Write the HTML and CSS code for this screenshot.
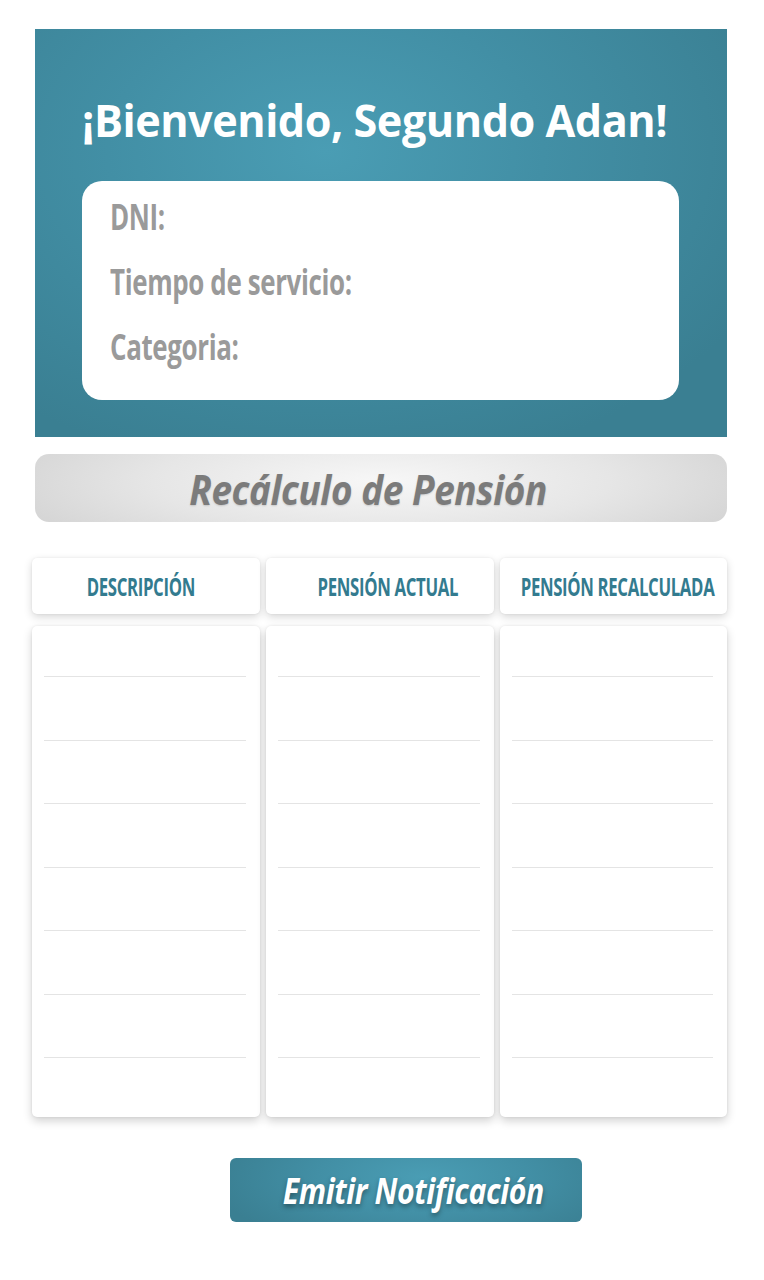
FILE: index.html
```html
<!DOCTYPE html>
<html lang="es">
<head>
<meta charset="utf-8">
<title>Recálculo de Pensión</title>
<link rel="stylesheet" href="styles.css">
</head>
<body>
<main class="page">
  <section class="welcome">
    <h1 class="welcome-title"><span class="cond-title">¡Bienvenido, Segundo Adan!</span></h1>
    <div class="info-card">
      <div class="info-row"><span class="cond-label">DNI:</span></div>
      <div class="info-row"><span class="cond-label">Tiempo de servicio:</span></div>
      <div class="info-row"><span class="cond-label">Categoria:</span></div>
    </div>
  </section>

  <div class="section-bar"><span class="cond-section">Recálculo de Pensión</span></div>

  <section class="table">
    <div class="col">
      <div class="head head-desc"><span class="cond-head">DESCRIPCIÓN</span></div>
      <div class="body">
        <div class="row first"></div><div class="row"></div><div class="row"></div><div class="row"></div><div class="row"></div><div class="row"></div><div class="row"></div><div class="row last"></div>
      </div>
    </div>
    <div class="col">
      <div class="head head-actual"><span class="cond-head">PENSIÓN ACTUAL</span></div>
      <div class="body">
        <div class="row first"></div><div class="row"></div><div class="row"></div><div class="row"></div><div class="row"></div><div class="row"></div><div class="row"></div><div class="row last"></div>
      </div>
    </div>
    <div class="col">
      <div class="head head-recalc"><span class="cond-head">PENSIÓN RECALCULADA</span></div>
      <div class="body">
        <div class="row first"></div><div class="row"></div><div class="row"></div><div class="row"></div><div class="row"></div><div class="row"></div><div class="row"></div><div class="row last"></div>
      </div>
    </div>
  </section>

  <div class="actions">
    <button class="btn" type="button"><span class="cond-btn">Emitir Notificación</span></button>
  </div>
</main>
</body>
</html>
```

FILE: styles.css
```css
* { box-sizing: border-box; }
html, body { margin: 0; padding: 0; background: #ffffff; }
body {
  font-family: "Open Sans", "Noto Sans", "DejaVu Sans", sans-serif;
  width: 764px;
  height: 1280px;
  overflow: hidden;
}
.page {
  padding: 29px 37px 0 32px;
  display: flex;
  flex-direction: column;
}
.welcome {
  margin-left: 3px;
  height: 408px;
  background: radial-gradient(ellipse 70% 80% at 42% 30%, #4a9db4 0%, #428fa5 45%, #3a7f92 100%);
  padding: 70px 48px 0 47px;
}
.welcome-title {
  margin: 0;
  height: 82px;
  line-height: 42px;
  font-size: 45px;
  font-weight: 700;
  color: #ffffff;
  white-space: nowrap;
}
.cond-title {
  display: inline-block;
  transform: scaleX(0.96);
  transform-origin: left center;
  letter-spacing: -0.5px;
}
.info-card {
  background: #ffffff;
  border-radius: 20px;
  height: 219px;
  padding: 14px 28px 0 28px;
  display: flex;
  flex-direction: column;
}
.info-row {
  height: 65px;
  line-height: 44px;
  font-size: 36px;
  font-weight: 700;
  color: #9a9a9a;
  white-space: nowrap;
}
.cond-label {
  display: inline-block;
  transform: scaleX(0.72);
  transform-origin: left center;
  letter-spacing: -0.5px;
}
.section-bar {
  margin-left: 3px;
  margin-top: 17px;
  height: 68px;
  border-radius: 14px;
  background: radial-gradient(ellipse 60% 130% at 50% 40%, #f7f7f7 0%, #e6e6e6 55%, #d2d2d2 100%);
  display: flex;
  align-items: center;
  justify-content: center;
  padding-right: 26px;
}
.cond-section {
  display: inline-block;
  font-size: 42px;
  font-weight: 700;
  font-style: italic;
  color: #7b7b7b;
  transform: scaleX(0.88);
  letter-spacing: -0.5px;
  text-shadow: 0 1px 2px rgba(0,0,0,0.15);
  white-space: nowrap;
}
.table {
  margin-top: 36px;
  display: grid;
  grid-template-columns: 228px 228px 227px;
  column-gap: 6px;
}
.col {
  display: flex;
  flex-direction: column;
  gap: 12px;
}
.head {
  height: 56px;
  background: #ffffff;
  border-radius: 5px;
  box-shadow: 0 3px 8px rgba(0,0,0,0.16), 0 0 2px rgba(0,0,0,0.08);
  display: flex;
  align-items: center;
  justify-content: center;
  color: #337b8f;
  font-size: 25px;
  font-weight: 700;
  white-space: nowrap;
}
.head-desc { padding-right: 10px; }
.head-actual { padding-left: 16px; }
.head-recalc { padding-left: 8px; }
.cond-head {
  display: inline-block;
  transform: scaleX(0.67);
  letter-spacing: -0.5px;
}
.body {
  height: 491px;
  background: #ffffff;
  border-radius: 5px;
  box-shadow: 0 4px 10px rgba(0,0,0,0.18), 0 0 3px rgba(0,0,0,0.08);
  padding: 0 14px 0 12px;
  display: flex;
  flex-direction: column;
}
.row {
  height: 63.5px;
  border-bottom: 1px solid #e4e4e4;
  flex: none;
}
.row.first { height: 51px; }
.row.last { flex: 1; border-bottom: none; }
.actions {
  margin-top: 41px;
  display: flex;
  justify-content: center;
  padding-left: 53px;
}
.btn {
  width: 352px;
  height: 64px;
  border: none;
  border-radius: 6px;
  background: radial-gradient(ellipse 60% 120% at 55% 30%, #4a9db4 0%, #428fa5 50%, #3a7f92 100%);
  display: flex;
  align-items: center;
  justify-content: center;
  font-family: inherit;
  padding: 0 0 0 14px;
}
.cond-btn {
  display: inline-block;
  font-size: 36px;
  font-weight: 700;
  font-style: italic;
  color: #ffffff;
  transform: scaleX(0.84);
  letter-spacing: -0.5px;
  text-shadow: 0 3px 6px rgba(0,0,0,0.35);
  white-space: nowrap;
}
```
